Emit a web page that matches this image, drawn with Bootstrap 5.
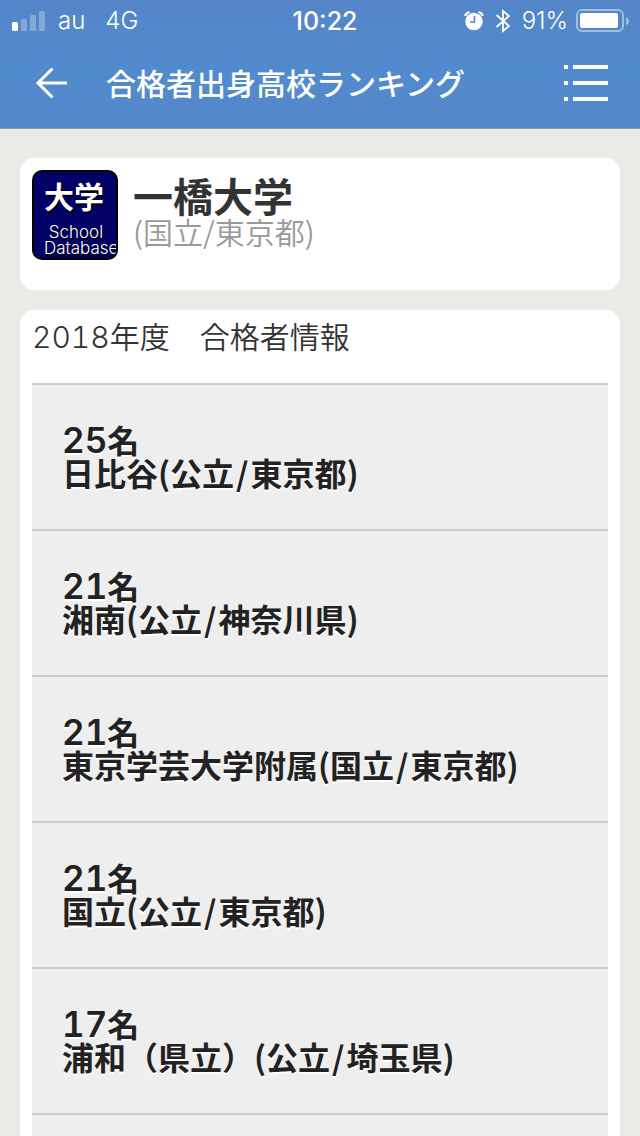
<!DOCTYPE html>
<html lang="ja">
<head>
<meta charset="utf-8">
<meta name="viewport" content="width=device-width, initial-scale=1">
<title>合格者出身高校ランキング</title>
<link href="https://cdn.jsdelivr.net/npm/bootstrap@5.3.0/dist/css/bootstrap.min.css" rel="stylesheet">
<style>
  body { font-family: "Noto Sans CJK JP", sans-serif; background: #ebeae6; color: #333; }
  .topbar { background: linear-gradient(#5485c8, #518bcd 55%, #5588cb); border-bottom: 1px solid #999; color: #fff; }
  .status { height: 40px; padding: 1px 10px 0 12px; font: 300 24px/40px Inter, sans-serif; display: grid; grid-template-columns: 1fr auto 1fr; }
  .clock { font-weight: 500; font-size: 25px; }
  .titlebar { height: 88px; padding: 0 32px 2px; }
  .titlebar h1 { font-size: 30px; line-height: 44px; font-weight: 500; margin-left: 34px; padding-bottom: 2px; }
  .iconbtn { background: none; border: 0; padding: 0; color: #fff; line-height: 0; }
  .page-body { padding: 29px 20px 0; gap: 20px; }
  .panel { background: #fff; border-radius: 14px; padding: 12px; }
  .school { height: 132px; gap: 15px; }
  .thumb { width: 86px; height: 90px; background: #006; border: 2px solid #000; border-radius: 10px; color: #fff; overflow: hidden; white-space: nowrap; text-shadow: 1px 2px 1px #000; padding: 4px 0 0 10px; }
  .thumb-title { font-weight: 700; font-size: 30px; line-height: 38px; }
  .thumb-sub { font: 300 17px/16px Inter, sans-serif; padding-top: 10px; }
  .school h2 { font-size: 40px; line-height: 40px; font-weight: 700; padding-top: 5px; }
  .place { font-size: 30px; line-height: 32px; font-weight: 350; color: #999; }
  .info { border-radius: 14px 14px 0 0; padding-top: 9px; padding-bottom: 0; }
  .info h3 { font-size: 30px; line-height: 32px; font-weight: 350; margin: 0 0 30px; }
  .digits { font-family: Inter, sans-serif; font-variant-numeric: tabular-nums; }
  .ranks li { background: #eee; border-top: 2px solid #ccc; }
  .ranks a { display: block; height: 144px; padding: 38px 30px 0; font-size: 32px; line-height: 32px; font-weight: 700; color: #222; text-decoration: none; text-shadow: 0 2px 0 #fff; }
  .ranks .digits { font-size: 35px; font-weight: 600; }
  .ranks a > span { display: block; }
  .ranks i { font-style: normal; padding: 0 2px; }
</style>
</head>
<body>
<div class="d-flex flex-column min-vh-100">
  <header class="topbar">
    <div class="status">
      <div class="d-flex align-items-center">
        <svg width="34" height="22" viewBox="0 0 34 22" fill="#fff" aria-hidden="true"><rect y="12" width="6" height="9" rx="1.5"/><g opacity=".28"><rect x="9" y="9" width="6" height="12" rx="1.5"/><rect x="18" y="5" width="6" height="16" rx="1.5"/><rect x="27" y="1" width="6" height="20" rx="1.5"/></g></svg>
        <span class="ms-2 ps-1">au</span><span class="ms-3 ps-1">4G</span>
      </div>
      <span class="clock ps-2">10:22</span>
      <div class="d-flex align-items-center justify-content-end">
        <svg width="20" height="20" viewBox="0 0 20 20" aria-hidden="true"><circle cx="10" cy="10.500" r="8.700" fill="#fff"/><path d="M1 5Q2 2 5.500 1M19 5Q18 2 14.500 1" fill="none" stroke="#fff" stroke-width="2"/><path d="M10.500 5v6H6" fill="none" stroke="#5287ca" stroke-width="1.600"/></svg>
        <svg class="mx-2" width="22" height="24" viewBox="0 0 22 24" fill="none" stroke="#fff" stroke-width="1.800" aria-hidden="true"><path d="M4.500 6 17 17l-6 5V2l6 5L4.500 18"/></svg>
        <span>91%</span>
        <svg class="ms-2" width="54" height="24" viewBox="0 0 54 24" aria-hidden="true"><rect x="1" y="1" width="46" height="21" rx="5" fill="none" stroke="#fff" stroke-opacity=".45" stroke-width="2"/><rect x="4" y="4" width="38" height="15" rx="2" fill="#fff"/><path d="M50 8q3 1 3 4t-3 4z" fill="#fff" opacity=".45"/></svg>
      </div>
    </div>
    <nav class="titlebar d-flex align-items-center">
      <button class="iconbtn" type="button" aria-label="戻る"><svg width="40" height="34" viewBox="0 0 40 34" fill="none" stroke="#fff" stroke-width="3"><path d="M20.500 2.500 6 17l14.500 14.500M6 17h29"/></svg></button>
      <h1 class="mb-0">合格者出身高校ランキング</h1>
      <button class="iconbtn ms-auto" type="button" aria-label="メニュー"><svg width="44" height="36" viewBox="0 0 44 36" fill="#fff"><path d="M0 0h4v4H0zM9 0h35v4H9zM0 16h4v4H0zM9 16h35v4H9zM0 32h4v4H0zM9 32h35v4H9z"/></svg></button>
    </nav>
  </header>
  <main class="page-body d-flex flex-column flex-grow-1">
    <section class="panel school d-flex">
      <div class="thumb flex-shrink-0">
        <div class="thumb-title">大学</div>
        <div class="thumb-sub">&nbsp;School<br>Database</div>
      </div>
      <div>
        <h2 class="mb-0">一橋大学</h2>
        <div class="place">(国立/東京都)</div>
      </div>
    </section>
    <section class="panel info d-flex flex-column flex-grow-1">
      <h3><span class="digits">2018</span>年度　合格者情報</h3>
      <ul class="ranks list-unstyled mb-0 d-flex flex-column flex-grow-1">
        <li><a href="#"><span><b class="digits">25</b>名</span><span>日比谷(公立<i>/</i>東京都)</span></a></li>
        <li><a href="#"><span><b class="digits">21</b>名</span><span>湘南(公立<i>/</i>神奈川県)</span></a></li>
        <li><a href="#"><span><b class="digits">21</b>名</span><span>東京学芸大学附属(国立<i>/</i>東京都)</span></a></li>
        <li><a href="#"><span><b class="digits">21</b>名</span><span>国立(公立<i>/</i>東京都)</span></a></li>
        <li><a href="#"><span><b class="digits">17</b>名</span><span>浦和（県立）(公立<i>/</i>埼玉県)</span></a></li>
        <li class="flex-grow-1"></li>
      </ul>
    </section>
  </main>
</div>
<script src="https://cdn.jsdelivr.net/npm/bootstrap@5.3.0/dist/js/bootstrap.bundle.min.js"></script>
</body>
</html>
